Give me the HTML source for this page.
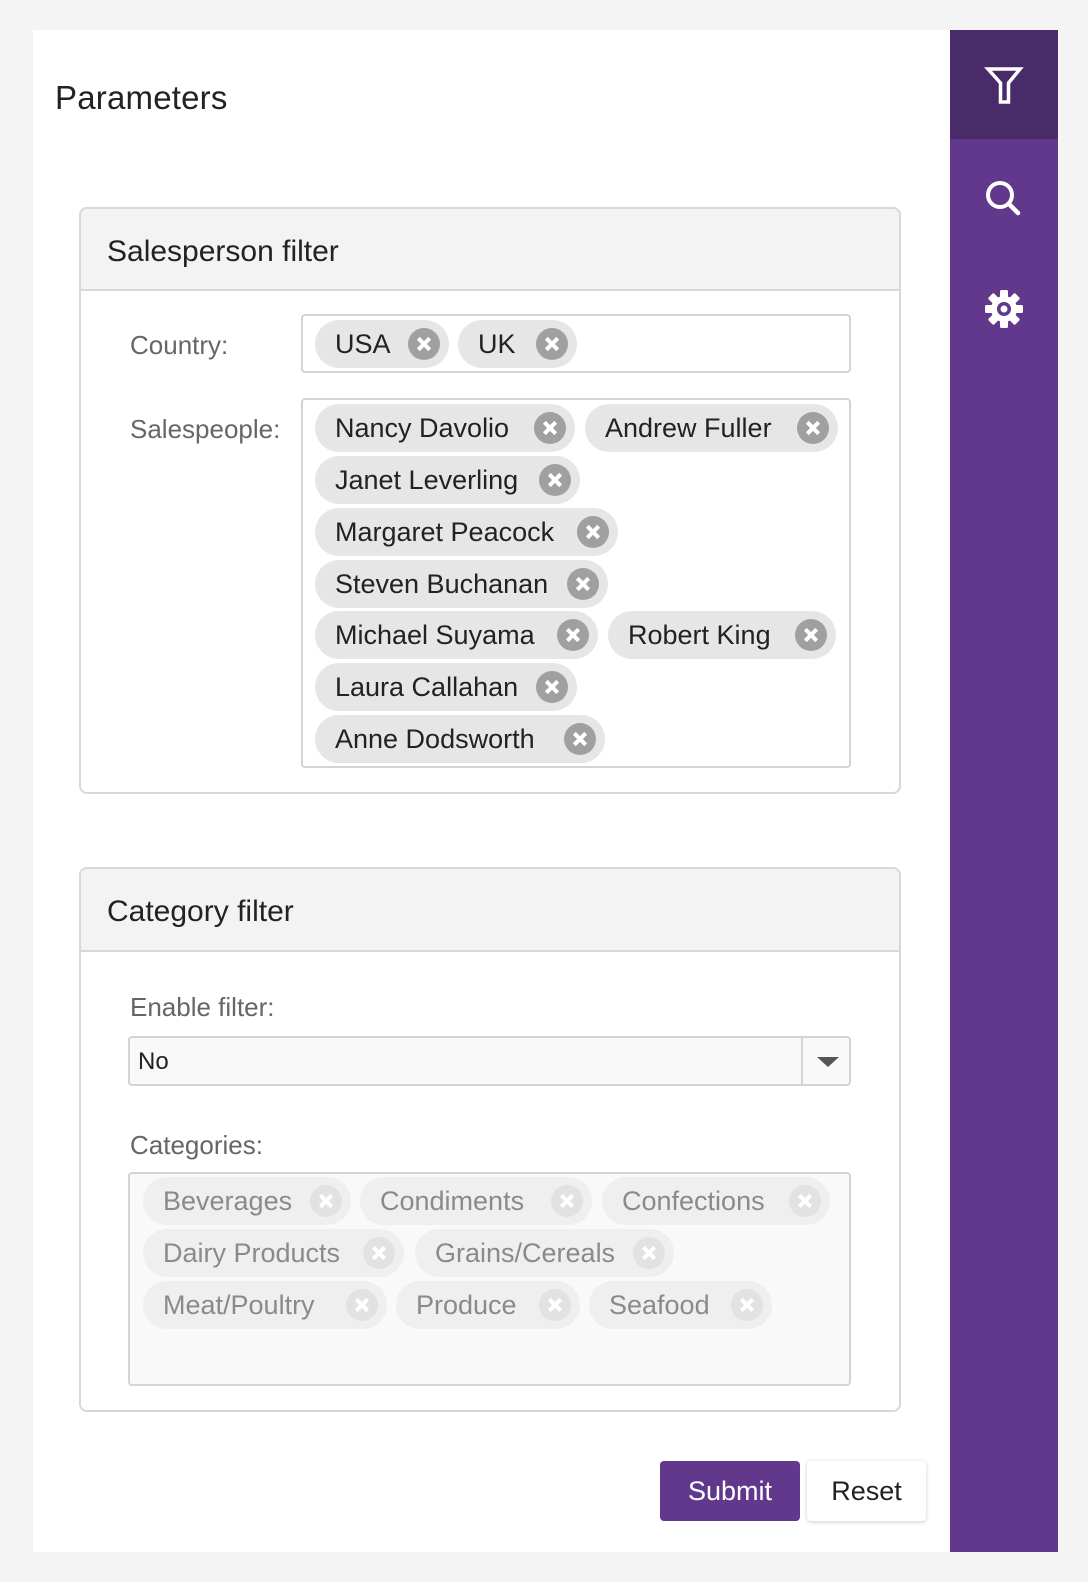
<!DOCTYPE html>
<html><head><meta charset="utf-8">
<style>
*{box-sizing:border-box;margin:0;padding:0}
body{width:1088px;height:1582px;background:#f4f4f4;font-family:"Liberation Sans",sans-serif;position:relative;overflow:hidden;color:#222}
.abs{position:absolute}
.panel{left:33px;top:30px;width:917px;height:1522px;background:#fff}
.side{left:950px;top:30px;width:108px;height:1522px;background:#62388d}
.side .top{position:absolute;left:0;top:0;width:108px;height:109px;background:#4a2b69}
h1{position:absolute;left:55px;top:79px;font-size:33px;font-weight:normal;color:#222;letter-spacing:0.2px}
.box{position:absolute;border:2px solid #d8d8d8;border-radius:8px;background:#fff;overflow:hidden}
.hdr{position:absolute;left:0;top:0;right:0;background:#f3f3f3;border-bottom:2px solid #d8d8d8}
.hdr span{position:absolute;left:26px;font-size:30px;color:#222}
.lbl{position:absolute;font-size:26px;color:#666}
.inp{position:absolute;border:2px solid #d4d4d4;border-radius:4px;background:#fff}
.tag{position:absolute;height:48px;border-radius:24px;background:#e6e6e6;font-size:27px;line-height:48px;padding-left:20px;color:#222;white-space:nowrap}
.tag i{position:absolute;right:9px;top:8px;width:32px;height:32px;border-radius:50%;background:#a0a0a0}
.tag i:before,.tag i:after{content:"";position:absolute;left:8px;top:14px;width:16px;height:4px;background:#fff;transform:rotate(45deg)}
.tag i:after{transform:rotate(-45deg)}
.dis .tag{background:#efefef;color:#8a8a8a}
.dis .tag i{background:#e2e2e2}
.btn{position:absolute;height:60px;border-radius:4px;font-size:27px;line-height:60px;text-align:center}
</style></head><body>
<div class="abs panel"></div>
<div class="abs side"><div class="top"></div>
<svg class="abs" style="left:28px;top:30px" width="52" height="52" viewBox="0 0 52 52"><path d="M10 9 H42 L30.5 23 V42 H22.5 V23 Z" fill="none" stroke="#fff" stroke-width="3.5" stroke-linejoin="miter"/></svg>
<svg class="abs" style="left:28px;top:143px" width="52" height="52" viewBox="0 0 52 52"><circle cx="22" cy="22" r="12" fill="none" stroke="#fff" stroke-width="4"/><path d="M31 31 L40 40" stroke="#fff" stroke-width="4.5" stroke-linecap="round"/></svg>
<svg class="abs" style="left:28px;top:253px" width="52" height="52" viewBox="0 0 52 52"><g fill="#fff" transform="translate(26 26)"><circle r="13"/><g id="t"><rect x="-4" y="-19" width="8" height="8" rx="1.5"/></g><use href="#t" transform="rotate(45)"/><use href="#t" transform="rotate(90)"/><use href="#t" transform="rotate(135)"/><use href="#t" transform="rotate(180)"/><use href="#t" transform="rotate(225)"/><use href="#t" transform="rotate(270)"/><use href="#t" transform="rotate(315)"/></g><circle cx="26" cy="26" r="7" fill="#62388d"/><circle cx="26" cy="26" r="3.5" fill="#fff"/></svg>
</div>
<h1>Parameters</h1>

<div class="box" style="left:79px;top:207px;width:822px;height:587px">
 <div class="hdr" style="height:82px"><span style="top:26px">Salesperson filter</span></div>
</div>
<div class="lbl" style="left:130px;top:330px">Country:</div>
<div class="inp" style="left:301px;top:314px;width:550px;height:59px"></div>
<div class="tag" style="left:315px;top:320px;width:134px">USA<i></i></div>
<div class="tag" style="left:458px;top:320px;width:119px">UK<i></i></div>
<div class="lbl" style="left:130px;top:414px">Salespeople:</div>
<div class="inp" style="left:301px;top:398px;width:550px;height:370px"></div>
<div class="tag" style="left:315px;top:404px;width:260px">Nancy Davolio<i></i></div>
<div class="tag" style="left:585px;top:404px;width:253px">Andrew Fuller<i></i></div>
<div class="tag" style="left:315px;top:456px;width:265px">Janet Leverling<i></i></div>
<div class="tag" style="left:315px;top:508px;width:303px">Margaret Peacock<i></i></div>
<div class="tag" style="left:315px;top:560px;width:293px">Steven Buchanan<i></i></div>
<div class="tag" style="left:315px;top:611px;width:283px">Michael Suyama<i></i></div>
<div class="tag" style="left:608px;top:611px;width:228px">Robert King<i></i></div>
<div class="tag" style="left:315px;top:663px;width:262px">Laura Callahan<i></i></div>
<div class="tag" style="left:315px;top:715px;width:290px">Anne Dodsworth<i></i></div>

<div class="box" style="left:79px;top:867px;width:822px;height:545px">
 <div class="hdr" style="height:83px"><span style="top:26px">Category filter</span></div>
</div>
<div class="lbl" style="left:130px;top:992px">Enable filter:</div>
<div class="inp" style="left:128px;top:1036px;width:723px;height:50px;background:#f9f9f9">
 <div class="abs" style="left:8px;top:10px;font-size:24px;color:#222">No</div>
 <div class="abs" style="left:671px;top:0;width:2px;height:46px;background:#d4d4d4"></div>
 <div class="abs" style="left:687px;top:19px;width:0;height:0;border-left:11px solid transparent;border-right:11px solid transparent;border-top:10px solid #555"></div>
</div>
<div class="lbl" style="left:130px;top:1130px">Categories:</div>
<div class="inp" style="left:128px;top:1172px;width:723px;height:214px;background:#f9f9f9"></div>
<div class="dis">
<div class="tag" style="left:143px;top:1177px;width:208px">Beverages<i></i></div>
<div class="tag" style="left:360px;top:1177px;width:232px">Condiments<i></i></div>
<div class="tag" style="left:602px;top:1177px;width:228px">Confections<i></i></div>
<div class="tag" style="left:143px;top:1229px;width:261px">Dairy Products<i></i></div>
<div class="tag" style="left:415px;top:1229px;width:259px">Grains/Cereals<i></i></div>
<div class="tag" style="left:143px;top:1281px;width:244px">Meat/Poultry<i></i></div>
<div class="tag" style="left:396px;top:1281px;width:184px">Produce<i></i></div>
<div class="tag" style="left:589px;top:1281px;width:183px">Seafood<i></i></div>
</div>

<div class="btn" style="left:660px;top:1461px;width:140px;background:#62388d;color:#fff">Submit</div>
<div class="btn" style="left:807px;top:1461px;width:119px;background:#fff;color:#222;box-shadow:0 1px 4px rgba(0,0,0,0.2)">Reset</div>
</body></html>
